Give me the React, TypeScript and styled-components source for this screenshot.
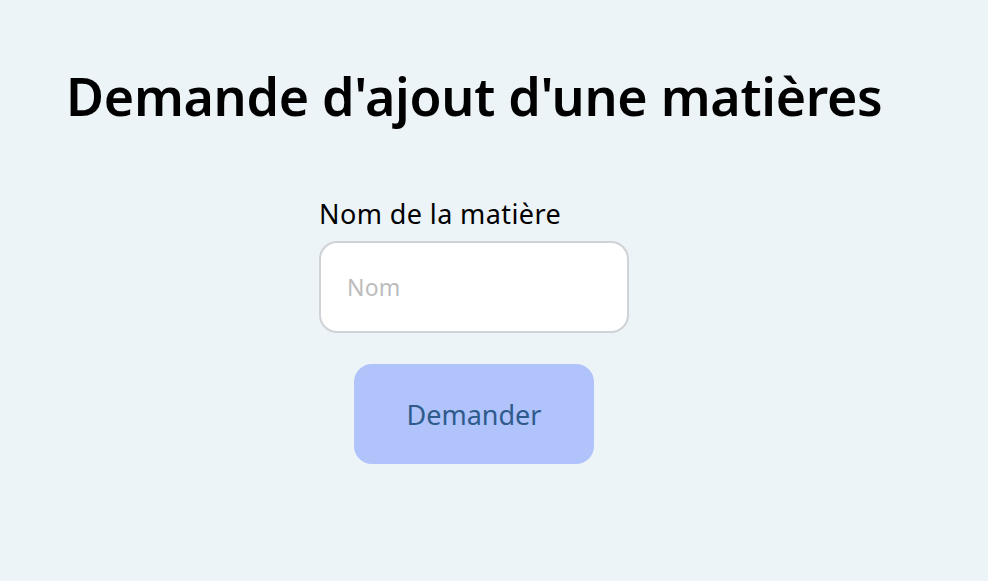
import styled, { createGlobalStyle } from "styled-components";

const Global = createGlobalStyle`
  html, body {
    margin: 0;
    padding: 0;
    background: #edf4f8;
    font-family: "Noto Sans", "Open Sans", sans-serif;
  }
`;

const Page = styled.div`
  min-height: 581px;
  padding: 62px 0 0 66px;
  box-sizing: border-box;
`;

const Title = styled.h1`
  margin: 0;
  font-size: 52px;
  font-weight: 600;
  letter-spacing: -0.3px;
  color: #000;
  line-height: 68px;
`;

const Form = styled.form`
  display: flex;
  flex-direction: column;
  align-items: center;
  width: 310px;
  margin: 66px 0 0 253px;
`;

const Field = styled.div`
  display: flex;
  flex-direction: column;
  width: 100%;
  gap: 10px;
`;

const Label = styled.label`
  font-size: 27px;
  letter-spacing: 0.4px;
  color: #000;
  line-height: 35px;
`;

const Input = styled.input`
  box-sizing: border-box;
  width: 100%;
  height: 92px;
  border: 2px solid #cfd2d6;
  border-radius: 18px;
  background: #fff;
  padding: 0 26px;
  font-family: inherit;
  font-size: 23px;
  letter-spacing: 0.2px;
  outline: none;
  &::placeholder {
    color: #bcbcbc;
  }
`;

const Button = styled.button`
  margin-top: 31px;
  width: 240px;
  height: 100px;
  border: none;
  border-radius: 18px;
  background: #b0c3fb;
  color: #2e5b8c;
  font-family: inherit;
  font-size: 27px;
  letter-spacing: 0px;
  cursor: pointer;
`;

export default function App() {
  return (
    <Page>
      <Global />
      <Title>Demande d'ajout d'une matières</Title>
      <Form onSubmit={(e) => e.preventDefault()}>
        <Field>
          <Label htmlFor="nom">Nom de la matière</Label>
          <Input id="nom" placeholder="Nom" />
        </Field>
        <Button type="submit">Demander</Button>
      </Form>
    </Page>
  );
}
